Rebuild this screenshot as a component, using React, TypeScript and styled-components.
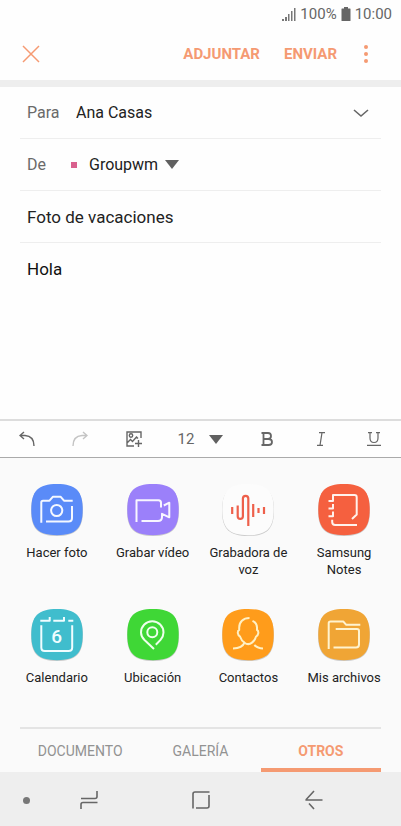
import React from 'react';
import styled, { createGlobalStyle } from 'styled-components';

const accent = '#f59a72';
const grey = '#666';

const GlobalStyle = createGlobalStyle`
  *, *::before, *::after { box-sizing: border-box; }
  body { margin: 0; background: #fff; font-family: Roboto, "Liberation Sans", sans-serif; }
  button, input, textarea, select { font: inherit; color: inherit; margin: 0; padding: 0; border: 0; background: none; border-radius: 0; outline: none; }
  button { cursor: pointer; }
  svg { display: block; flex: none; }
`;

const Screen = styled.div`
  display: flex;
  flex-direction: column;
  min-height: 100vh;
  background: #fefefe;
`;

const StatusBar = styled.div`
  display: flex;
  align-items: center;
  justify-content: flex-end;
  gap: 4px;
  height: 28px;
  padding-right: 9px;
  font-size: 15px;
  color: ${grey};
`;

const Header = styled.header`
  display: flex;
  align-items: center;
  gap: 18px;
  height: 59px;
  padding: 0 24px 0 20px;
  border-bottom: 7px solid #eee;
`;

const IconButton = styled.button<{ $faded?: boolean }>`
  display: flex;
  align-items: center;
  justify-content: center;
  color: ${(p) => (p.$faded ? '#c4c4c4' : grey)};
`;

const AccentButton = styled(IconButton)`
  min-width: 22px;
  height: 40px;
  color: ${accent};
`;

const Actions = styled.div`
  display: flex;
  align-items: center;
  gap: 24px;
  margin-left: auto;
`;

const TextAction = styled.button`
  font-size: 15px;
  font-weight: 700;
  color: ${accent};
`;

const Form = styled.form`
  display: flex;
  flex-direction: column;
  flex: 1;
  padding: 0 20px;
`;

const Field = styled.div`
  display: flex;
  align-items: center;
  height: 52px;
  padding: 0 7px;
  border-bottom: 1px solid #eee;
  font-size: 16px;
  color: #222;
`;

const FieldLabel = styled.label`
  width: 49px;
  color: #6a6a6a;
`;

const TextInput = styled.input`
  flex: 1;
  min-width: 0;
`;

const SubjectInput = styled(TextInput)`
  font-size: 17px;
`;

const AccountMark = styled.span`
  width: 6px;
  height: 6px;
  margin: 0 12px 0 -5px;
  background: #d9608e;
`;

const AccountSelect = styled.select`
  appearance: none;
  width: 76px;
`;

const Body = styled.textarea`
  flex: 1;
  min-height: 160px;
  padding: 15px 7px;
  resize: none;
  font-size: 17px;
  line-height: 22px;
  color: #111;
`;

const Toolbar = styled.div`
  display: grid;
  grid-template-columns: 2fr 2fr 2fr 3fr 2fr 2fr 2fr;
  height: 39px;
  border-top: 2px solid #ddd;
  border-bottom: 1px solid #aaa;
`;

const SizePicker = styled.div`
  display: flex;
  align-items: center;
  justify-content: center;
  color: ${grey};
`;

const SizeSelect = styled.select`
  appearance: none;
  width: 32px;
  font-size: 15px;
`;

const Panel = styled.section`
  background: #fafafa;
  padding: 26px 20px 0;
`;

const AppGrid = styled.div`
  display: grid;
  grid-template-columns: repeat(4, 1fr);
  grid-auto-rows: 125px;
  margin: 0 -11px;
`;

const AppButton = styled.button`
  display: flex;
  flex-direction: column;
  align-items: center;
  gap: 8px;
  font-size: 13px;
  line-height: 17px;
  color: #222;
`;

const AppName = styled.span`
  max-width: 92px;
`;

const Tabs = styled.nav`
  display: grid;
  grid-template-columns: repeat(3, 1fr);
  height: 45px;
  margin-top: -7px;
  border-top: 2px solid #e4e4e4;
`;

const Tab = styled.button<{ $active?: boolean }>`
  border-bottom: 4px solid ${(p) => (p.$active ? accent : 'transparent')};
  padding-top: 5px;
  font-size: 14px;
  font-weight: ${(p) => (p.$active ? 700 : 400)};
  color: ${(p) => (p.$active ? accent : '#929292')};
`;

const NavBar = styled.nav`
  display: grid;
  grid-template-columns: 33px 1fr 1fr 1fr 31px;
  height: 54px;
  padding-top: 2px;
  background: #eee;
`;

const NavDot = styled.span`
  align-self: center;
  justify-self: end;
  width: 7px;
  height: 7px;
  margin-right: 3px;
  border-radius: 50%;
  background: #777;
`;

const Triangle = () => (
  <svg width="14" height="9" viewBox="0 0 14 9" fill="#606060" aria-hidden="true"><path d="M0 0H14L7 9Z" /></svg>
);

interface GlyphProps { w: number; h: number; stroke?: number; children: React.ReactNode }
const Glyph = ({ w, h, stroke = 1.4, children }: GlyphProps) => (
  <svg width={w} height={h} viewBox={`0 0 ${w} ${h}`} fill="none" stroke="currentColor" strokeWidth={stroke} aria-hidden="true">
    {children}
  </svg>
);

interface AppEntry { name: string; fill: string; line: string; weight?: number; art: React.ReactNode }

const apps: AppEntry[] = [
  {
    name: 'Hacer foto', fill: '#5a8bf8', line: '#f4f8ff',
    art: <><path d="M10.3 38.7V18.2Q10.3 16.7 12 16.7H18.5L22 12.7H29.5L33 16.7H41.7" /><path d="M41 22V34Q41 37.5 37.5 37.5H15" /><circle cx="25.7" cy="26.5" r="5.6" /></>,
  },
  {
    name: 'Grabar vídeo', fill: '#9b80fa', line: '#f8f6ff',
    art: <><path d="M9.5 38V16.3H31.5Q34 16.3 34 18.8V23.5" /><path d="M36.8 21.5L42.3 18.7V33.3L35 29.8V33Q35 37 31 37H14.5" /></>,
  },
  {
    name: 'Grabadora de voz', fill: '#fcfcfc', line: '#ee604b', weight: 2.2,
    art: <><path d="M10.2 23V30M15.7 21.5V32.3A2.6 2.6 0 0 0 20.9 32.3V14.5A2.7 2.7 0 0 1 26.3 14.5V42M31.2 20V33M36.5 24V29M42 23V30" /></>,
  },
  {
    name: 'Samsung Notes', fill: '#f5603f', line: '#fff1ec',
    art: <><path d="M10.5 17H15V11H36.5Q38.7 11 38.7 13.2V30.5L34 35M10.5 24.6H15V20M10.5 32.2H15V27.6M14.2 35.8V38Q14.2 41 17.2 41H39" /></>,
  },
  {
    name: 'Calendario', fill: '#40bdcd', line: '#f0fdff',
    art: (
      <>
        <path d="M9.3 11.8H18.7V8M22.3 11.8H33V8M37.3 11.8H42.3M10.3 16.3V38.5Q10.3 42 13.8 42H37.5Q41.2 42 41.2 38.5V16.3" />
        <text x="25.7" y="34" textAnchor="middle" fontSize="19" fontWeight="500" fill="currentColor" stroke="none">6</text>
      </>
    ),
  },
  {
    name: 'Ubicación', fill: '#3fd736', line: '#eeffed',
    art: <><path d="M27 40L17.5 31C15 28.5 14 26 14 23.5A11.2 11.2 0 0 1 36.5 23.5C36.5 26.5 35.4 28.7 33.5 30.8L28.8 35.8" /><circle cx="25.3" cy="23.3" r="5" /></>,
  },
  {
    name: 'Contactos', fill: '#ff9c1b', line: '#fff0c4',
    art: <><path d="M27.5 9C21 9 17.2 13.2 17.2 18.5V21C15 21.8 15.5 26.5 18 27.5C19 30.5 20.7 32.5 22.5 33.7C25 35.6 28 35.2 30 33.6C32 32 33.5 30 34 27.6C36.8 26.4 37 22 35 21V18.5C35 15.5 33.3 13.2 30.5 11.8M22.5 33.7C21 37.5 17 39.3 11 39.5M32.3 36Q35.5 39.3 41 39.6" /></>,
  },
  {
    name: 'Mis archivos', fill: '#f0a535', line: '#fff3cf',
    art: <><path d="M10.7 40V14.2Q10.7 12.4 12.5 12.4H25.2L28 15.7H42.3M17.7 20H39Q41 20 41 22V35.5Q41 38.6 38 38.6H15.5" /></>,
  },
];

const AppIcon = ({ app }: { app: AppEntry }) => (
  <svg width="52" height="52" viewBox="0 0 52 52" color={app.line} fill="none" stroke="currentColor" strokeWidth={app.weight ?? 2} strokeLinejoin="round" aria-hidden="true">
    <path d="M26 1C45 1 52 8 52 26.5S45 52 26 52S0 45 0 26.5S7 1 26 1Z" fill="#000" fillOpacity=".18" stroke="none" />
    <path d="M26 0C45 0 51.7 7 51.7 25.6S45 51.2 26 51.2S.3 44.2 .3 25.6S7 0 26 0Z" fill={app.fill} stroke="none" />
    {app.art}
  </svg>
);

export default function App() {
  return (
    <>
      <GlobalStyle />
      <Screen>
        <StatusBar>
          <svg width="15" height="13" viewBox="0 0 15 13" fill="#777" aria-hidden="true">
            <path d="M1 11h2v2H1zM4 9h2v4H4zM7 6h1.5v7H7zM10 3h1.5v10H10zM13 0h1.5v13H13z" />
          </svg>
          <span>100%</span>
          <svg width="10" height="14" viewBox="0 0 10 14" fill="#666" aria-hidden="true">
            <path d="M3 0H7V1.5H9Q9.5 1.5 9.5 2V13.5Q9.5 14 9 14H1Q.5 14 .5 13.5V2Q.5 1.5 1 1.5H3Z" />
          </svg>
          <span>10:00</span>
        </StatusBar>
        <Header>
          <AccentButton aria-label="Cerrar">
            <Glyph w={18} h={18} stroke={1.5}><path d="M1 1L17 17M17 1L1 17" /></Glyph>
          </AccentButton>
          <Actions>
            <TextAction>ADJUNTAR</TextAction>
            <TextAction>ENVIAR</TextAction>
          </Actions>
          <AccentButton aria-label="Más opciones">
            <svg width="4" height="18" viewBox="0 0 4 18" fill="currentColor"><circle cx="2" cy="2" r="2" /><circle cx="2" cy="9" r="2" /><circle cx="2" cy="16" r="2" /></svg>
          </AccentButton>
        </Header>
        <Form onSubmit={(e) => e.preventDefault()}>
          <Field>
            <FieldLabel htmlFor="to">Para</FieldLabel>
            <TextInput id="to" defaultValue="Ana Casas" />
            <IconButton type="button" aria-label="Mostrar más campos">
              <Glyph w={26} h={10} stroke={1.6}><path d="M6 2L13 8L20 2" /></Glyph>
            </IconButton>
          </Field>
          <Field>
            <FieldLabel htmlFor="from">De</FieldLabel>
            <AccountMark />
            <AccountSelect id="from" defaultValue="Groupwm"><option>Groupwm</option></AccountSelect>
            <Triangle />
          </Field>
          <Field>
            <SubjectInput aria-label="Asunto" defaultValue="Foto de vacaciones" />
          </Field>
          <Body aria-label="Mensaje" defaultValue="Hola" />
        </Form>
        <Toolbar>
          <IconButton aria-label="Deshacer">
            <Glyph w={16} h={16}><path d="M5 1L1 4.5L5 8M1 4.5H6Q15 5 15 15" /></Glyph>
          </IconButton>
          <IconButton $faded aria-label="Rehacer">
            <Glyph w={16} h={16}><path d="M11 1L15 4.5L11 8M15 4.5H10Q1 5 1 15" /></Glyph>
          </IconButton>
          <IconButton aria-label="Insertar imagen">
            <Glyph w={16} h={16}><path d="M8 15H1V1H15V7M1 12L4.5 8.5L6.5 10.5L10.5 6L12 7.5M12.5 9V16M9 12.5H16" /><circle cx="5" cy="4.5" r="1.7" /></Glyph>
          </IconButton>
          <SizePicker>
            <SizeSelect aria-label="Tamaño de letra" defaultValue="12"><option>12</option></SizeSelect>
            <Triangle />
          </SizePicker>
          <IconButton aria-label="Negrita">
            <Glyph w={12} h={14} stroke={1.8}><path d="M.5 1H7Q10 1 10 4T7 7H2.5M.5 13H7.5Q11 13 11 10T7.5 7M2.5 1V13" /></Glyph>
          </IconButton>
          <IconButton aria-label="Cursiva">
            <Glyph w={8} h={14} stroke={1.2}><path d="M2 .7H8M0 13.3H6M5 .7L3 13.3" /></Glyph>
          </IconButton>
          <IconButton aria-label="Subrayado">
            <Glyph w={14} h={14} stroke={1.2}><path d="M1 .7H5M9 .7H13M3 .7V6Q3 10.5 7 10.5T11 6V.7M0 13.3H14" /></Glyph>
          </IconButton>
        </Toolbar>
        <Panel>
          <AppGrid>
            {apps.map((app) => (
              <AppButton key={app.name}>
                <AppIcon app={app} />
                <AppName>{app.name}</AppName>
              </AppButton>
            ))}
          </AppGrid>
          <Tabs>
            <Tab>DOCUMENTO</Tab>
            <Tab>GALERÍA</Tab>
            <Tab $active>OTROS</Tab>
          </Tabs>
        </Panel>
        <NavBar>
          <NavDot />
          <IconButton aria-label="Recientes">
            <Glyph w={18} h={20} stroke={1.6}><path d="M1 8.5H15Q17 8.5 17 6.5V1M1 19V14.5Q1 12.5 3 12.5H17.5" /></Glyph>
          </IconButton>
          <IconButton aria-label="Inicio">
            <Glyph w={18} h={18} stroke={1.6}><path d="M1 17.5V3Q1 1 3 1H17.5M17 4V15Q17 17 15 17H4" /></Glyph>
          </IconButton>
          <IconButton aria-label="Atrás">
            <Glyph w={18} h={20} stroke={1.6}><path d="M9 1L1.2 9.5V10H17.5M4 13.5L9 19" /></Glyph>
          </IconButton>
        </NavBar>
      </Screen>
    </>
  );
}
